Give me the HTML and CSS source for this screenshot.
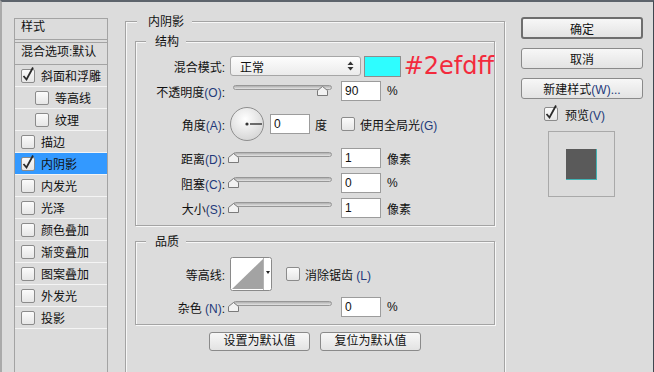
FILE: index.html
```html
<!DOCTYPE html>
<html lang="zh-CN">
<head>
<meta charset="UTF-8">
<meta name="viewport" content="width=device-width, initial-scale=1.0">
<title>图层样式</title>
<link rel="stylesheet" href="styles.css">
</head>
<body>
<div class="window">
    <!-- 左侧样式列表 -->
    <div class="style-list">
        <div class="list-head">样式</div>
        <div class="list-blend">混合选项:默认</div>
        <div class="list-item"><span class="cb"><svg width="14" height="14" viewBox="0 0 14 14"><path d="M2.5 7 L5.5 10.5 L12 -1.5"/></svg></span>斜面和浮雕</div>
        <div class="list-item sub"><span class="cb"></span>等高线</div>
        <div class="list-item sub"><span class="cb"></span>纹理</div>
        <div class="list-item"><span class="cb"></span>描边</div>
        <div class="list-item active"><span class="cb"><svg width="14" height="14" viewBox="0 0 14 14"><path d="M2.5 7 L5.5 10.5 L12 -1.5"/></svg></span>内阴影</div>
        <div class="list-item"><span class="cb"></span>内发光</div>
        <div class="list-item"><span class="cb"></span>光泽</div>
        <div class="list-item"><span class="cb"></span>颜色叠加</div>
        <div class="list-item"><span class="cb"></span>渐变叠加</div>
        <div class="list-item"><span class="cb"></span>图案叠加</div>
        <div class="list-item"><span class="cb"></span>外发光</div>
        <div class="list-item"><span class="cb"></span>投影</div>
    </div>

    <!-- 中间设置 -->
    <div class="main">
        <div class="group outer">
            <div class="group-title">内阴影</div>

            <div class="group">
                <div class="group-title">结构</div>
                <div class="row first">
                    <span class="label">混合模式:</span>
                    <div class="select">
                        <span>正常</span>
                        <svg width="7" height="10" viewBox="0 0 7 10"><polygon points="0.5,4 3.5,0.5 6.5,4"/><polygon points="0.5,6 3.5,9.5 6.5,6"/></svg>
                    </div>
                    <span class="swatch"></span>
                    <span class="hex">#2efdff</span>
                </div>
                <div class="row">
                    <span class="label">不透明度<span class="key">(O)</span>:</span>
                    <div class="slider">
                        <div class="track"></div>
                        <svg class="thumb" style="left: 87px" width="11" height="10" viewBox="0 0 11 10"><polygon points="5.5,0.5 10.5,4.5 10.5,9.5 0.5,9.5 0.5,4.5"/></svg>
                    </div>
                    <input class="num" type="text" value="90">
                    <span class="unit">%</span>
                </div>
                <div class="row dial-row">
                    <span class="label">角度<span class="key">(A)</span>:</span>
                    <svg class="dial" width="34" height="34" viewBox="0 0 34 34">
                        <defs>
                            <radialGradient id="dial-fill" cx="45%" cy="35%" r="65%">
                                <stop offset="0" stop-color="#ffffff"/>
                                <stop offset="1" stop-color="#d6d6d6"/>
                            </radialGradient>
                        </defs>
                        <circle cx="17" cy="17" r="16.5" fill="url(#dial-fill)" stroke="#8e8e8e"/>
                        <circle cx="17" cy="17" r="1.6" fill="#333"/>
                        <path d="M20 17 H32" stroke="#333" stroke-width="1.4"/>
                    </svg>
                    <input class="num gap" type="text" value="0">
                    <span class="unit">度</span>
                    <span class="cb spaced"></span>
                    <span>使用全局光<span class="key">(G)</span></span>
                </div>
                <div class="row after-dial">
                    <span class="label">距离<span class="key">(D)</span>:</span>
                    <div class="slider">
                        <div class="track"></div>
                        <svg class="thumb" style="left: -2px" width="11" height="10" viewBox="0 0 11 10"><polygon points="5.5,0.5 10.5,4.5 10.5,9.5 0.5,9.5 0.5,4.5"/></svg>
                    </div>
                    <input class="num" type="text" value="1">
                    <span class="unit">像素</span>
                </div>
                <div class="row">
                    <span class="label">阻塞<span class="key">(C)</span>:</span>
                    <div class="slider">
                        <div class="track"></div>
                        <svg class="thumb" style="left: -2px" width="11" height="10" viewBox="0 0 11 10"><polygon points="5.5,0.5 10.5,4.5 10.5,9.5 0.5,9.5 0.5,4.5"/></svg>
                    </div>
                    <input class="num" type="text" value="0">
                    <span class="unit">%</span>
                </div>
                <div class="row">
                    <span class="label">大小<span class="key">(S)</span>:</span>
                    <div class="slider">
                        <div class="track"></div>
                        <svg class="thumb" style="left: -2px" width="11" height="10" viewBox="0 0 11 10"><polygon points="5.5,0.5 10.5,4.5 10.5,9.5 0.5,9.5 0.5,4.5"/></svg>
                    </div>
                    <input class="num" type="text" value="1">
                    <span class="unit">像素</span>
                </div>
            </div>

            <div class="group quality">
                <div class="group-title">品质</div>
                <div class="row contour-row">
                    <span class="label">等高线:</span>
                    <svg class="contour" width="42" height="34" viewBox="0 0 42 34">
                        <rect x="0.5" y="0.5" width="41" height="33" rx="2" fill="#fff" stroke="#8a8a8a"/>
                        <polygon points="2,32 33,2 33,32" fill="#a3a3a3"/>
                        <path d="M33.5 1 V33" stroke="#b4b4b4"/>
                        <polygon points="36,14 40,14 38,17" fill="#222"/>
                    </svg>
                    <span class="cb spaced"></span>
                    <span>消除锯齿 <span class="key">(L)</span></span>
                </div>
                <div class="row noise-row">
                    <span class="label">杂色 <span class="key">(N)</span>:</span>
                    <div class="slider">
                        <div class="track"></div>
                        <svg class="thumb" style="left: -2px" width="11" height="10" viewBox="0 0 11 10"><polygon points="5.5,0.5 10.5,4.5 10.5,9.5 0.5,9.5 0.5,4.5"/></svg>
                    </div>
                    <input class="num" type="text" value="0">
                    <span class="unit">%</span>
                </div>
            </div>

            <div class="defaults">
                <button class="btn small">设置为默认值</button>
                <button class="btn small">复位为默认值</button>
            </div>
        </div>
    </div>

    <!-- 右侧按钮 -->
    <div class="side">
        <button class="btn default">确定</button>
        <button class="btn">取消</button>
        <button class="btn">新建样式<span class="key">(W)...</span></button>
        <div class="preview-check">
            <span class="cb"><svg width="14" height="14" viewBox="0 0 14 14"><path d="M2.5 7 L5.5 10.5 L12 -1.5"/></svg></span>
            <span>预览<span class="key">(V)</span></span>
        </div>
        <div class="preview">
            <div class="preview-square"></div>
        </div>
    </div>
</div>
</body>
</html>
```

FILE: styles.css
```css
body {
    margin: 0;
    background-color: #dcdcdc;
    font-family: "Liberation Sans", "Noto Sans CJK SC", sans-serif;
    font-size: 12px;
    color: #111;
    overflow: hidden;
}

.window {
    display: flex;
    align-items: flex-start;
    width: 654px;
    height: 372px;
    box-sizing: border-box;
    border-top: 2px solid #5d646c;
    border-left: 2px solid #aaaaaa;
    border-right: 1px solid #3f4750;
    overflow: hidden;
}

.key {
    color: #23397a;
}

/* checkbox */
.cb {
    position: relative;
    flex-shrink: 0;
    width: 14px;
    height: 14px;
    box-sizing: border-box;
    margin-right: 6px;
    border: 1px solid #8b8b8b;
    border-radius: 2px;
    background: linear-gradient(#fbfbfb, #e6e6e6);
}

.cb svg {
    position: absolute;
    left: -1px;
    top: -1px;
    overflow: visible;
}

.cb path {
    fill: none;
    stroke: #2b2b2b;
    stroke-width: 1.8;
}

.cb.spaced {
    margin-left: 14px;
    margin-right: 5px;
}

/* style list */
.style-list {
    flex-shrink: 0;
    width: 94px;
    height: 400px;
    margin: 16px 0 0 12px;
    box-sizing: border-box;
    border: 1px solid #a3a3a3;
}

.list-head {
    height: 20px;
    line-height: 17px;
    padding-left: 6px;
    margin-bottom: 2px;
    border-bottom: 1px solid #a3a3a3;
}

.list-blend {
    height: 21px;
    line-height: 18px;
    padding-left: 6px;
    border-top: 1px solid #a3a3a3;
    border-bottom: 1px solid #a3a3a3;
    white-space: nowrap;
}

.list-item {
    display: flex;
    align-items: center;
    height: 21px;
    padding-left: 6px;
    border-bottom: 1px solid #f4f4f4;
}

.list-item.sub {
    padding-left: 20px;
}

.list-item.active {
    background-color: #3399ff;
}

/* main */
.main {
    flex-shrink: 0;
    width: 380px;
    margin: 19px 0 0 17px;
}

.group {
    border: 1px solid #a4a4a4;
    box-shadow: inset 1px 1px 0 #f7f7f7, 1px 1px 0 #f7f7f7;
    padding-bottom: 7px;
}

.group.outer {
    height: 400px;
    box-sizing: border-box;
    padding: 0 9px;
}

.group-title {
    width: fit-content;
    margin: -7px 0 0 10px;
    padding: 0 7px 0 9px;
    line-height: 14px;
    background-color: #dcdcdc;
}

.outer > .group-title {
    margin-left: 2px;
    padding: 0 8px 0 11px;
}

.outer > .group {
    margin-top: 12px;
}

.outer > .group.quality {
    margin-top: 15px;
}

.row {
    display: flex;
    align-items: center;
    height: 20px;
    margin-top: 5px;
    white-space: nowrap;
}

.row.first {
    margin-top: 7px;
}

.row.dial-row {
    height: 34px;
    margin-top: 6px;
}

.row.after-dial {
    margin-top: 7px;
}

.row.contour-row {
    height: 34px;
    margin-top: 8px;
}

.row.noise-row {
    margin-top: 6px;
}

.label {
    flex-shrink: 0;
    width: 89px;
    margin-right: 5px;
    text-align: right;
}

.select {
    display: flex;
    align-items: center;
    justify-content: space-between;
    width: 132px;
    height: 20px;
    box-sizing: border-box;
    padding: 0 6px 0 9px;
    border: 1px solid #a6a6a6;
    border-radius: 3px;
    background: linear-gradient(#fdfdfd, #ebebeb);
}

.select polygon {
    fill: #333;
}

.swatch {
    width: 37px;
    height: 21px;
    box-sizing: border-box;
    margin-left: 3px;
    border: 1px solid #8d8d8d;
    background-color: #2efdff;
}

.hex {
    margin-left: 3px;
    font-family: "DejaVu Sans", sans-serif;
    font-size: 24px;
    line-height: 20px;
    color: #f32a3c;
}

.slider {
    position: relative;
    flex-shrink: 0;
    width: 106px;
    height: 20px;
}

.track {
    width: 99px;
    height: 5px;
    margin: 4px 0 0 3px;
    box-sizing: border-box;
    border: 1px solid #979797;
    border-radius: 3px;
    background: linear-gradient(#b0b0b0, #e4e4e4);
}

.thumb {
    position: absolute;
    top: 5px;
}

.thumb polygon {
    fill: #f2f2f2;
    stroke: #7a7a7a;
}

.num {
    width: 40px;
    height: 20px;
    box-sizing: border-box;
    margin: 0 0 0 5px;
    padding: 0 3px;
    border: 1px solid #9c9c9c;
    background-color: #fff;
    font-family: "Liberation Sans", sans-serif;
    font-size: 12px;
    color: #111;
    outline: none;
}

.num.gap {
    margin-left: 6px;
}

.unit {
    margin-left: 6px;
}

.dial-row .unit {
    margin-left: 5px;
}

.defaults {
    display: flex;
    justify-content: center;
    gap: 10px;
    margin-top: 7px;
}

/* buttons */
.btn {
    display: block;
    width: 100%;
    height: 21px;
    padding: 0;
    border: 1px solid #8a8a8a;
    border-radius: 3px;
    background: linear-gradient(#f7f7f7, #e3e3e3);
    font-family: "Liberation Sans", "Noto Sans CJK SC", sans-serif;
    font-size: 12px;
    color: #111;
}

.btn.small {
    width: 101px;
    height: 19px;
    line-height: 15px;
}

.btn.default {
    height: 22px;
    border: 2px solid #6e6e6e;
}

.side {
    flex-shrink: 0;
    width: 122px;
    margin: 15px 0 0 16px;
}

.side .btn + .btn {
    margin-top: 9px;
}

.preview-check {
    display: flex;
    align-items: center;
    height: 14px;
    margin-top: 8px;
    padding-left: 23px;
}

.preview-check .cb {
    margin-right: 7px;
}

.preview {
    display: flex;
    align-items: center;
    justify-content: center;
    width: 67px;
    height: 66px;
    box-sizing: border-box;
    margin: 10px 0 0 27px;
    border: 1px solid #a9a9a9;
}

.preview-square {
    width: 31px;
    height: 31px;
    background-color: #5a5a5a;
    box-shadow: inset -1px -1px 0 rgba(46, 253, 255, 0.55);
}
```
